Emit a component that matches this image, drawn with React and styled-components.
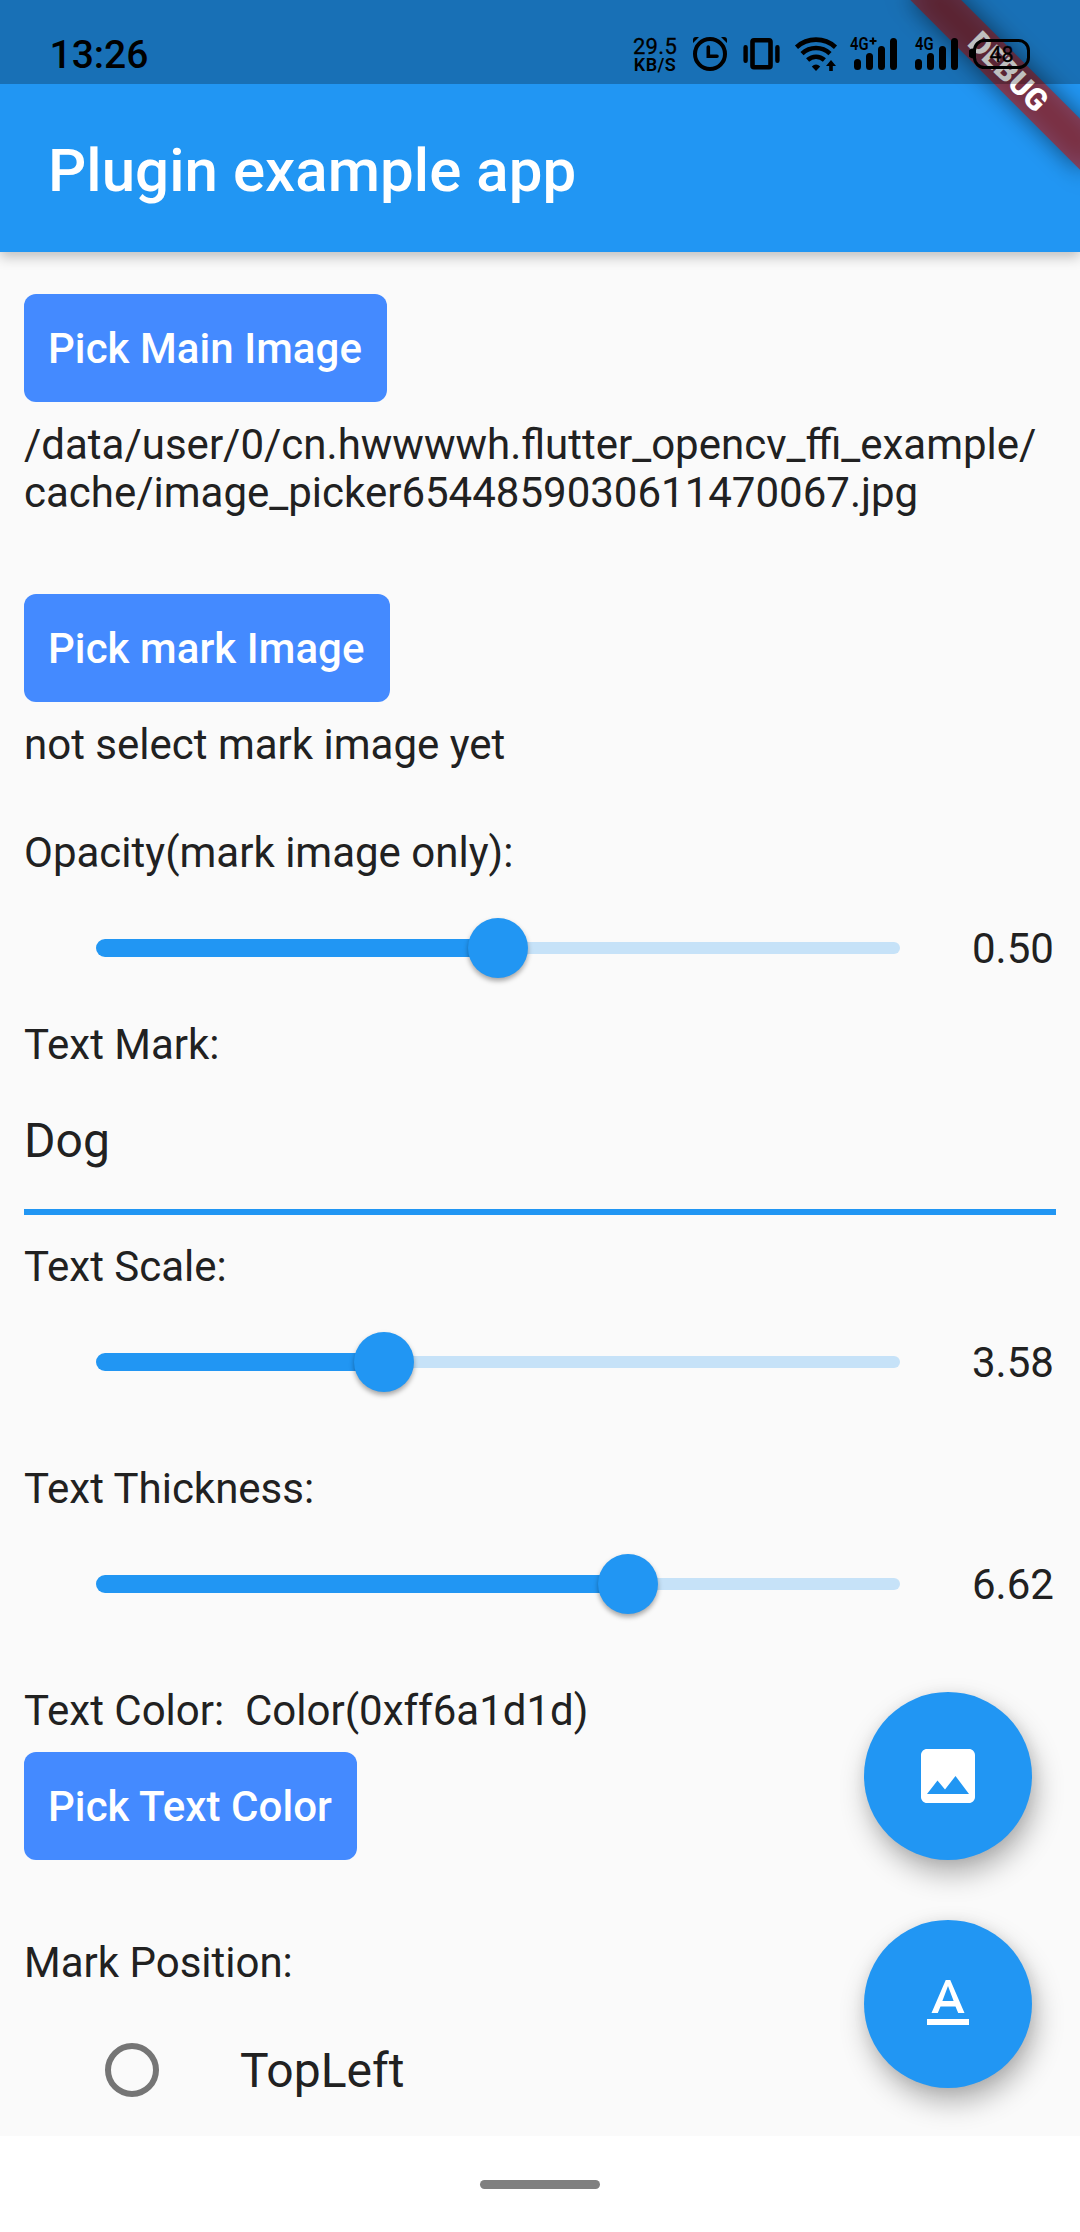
import React from "react";
import styled, { createGlobalStyle } from "styled-components";

const GlobalStyle = createGlobalStyle`
  * { box-sizing: border-box; }
  html, body { margin: 0; padding: 0; background: #fff; }
  body { font-family: Roboto, "Liberation Sans", sans-serif; color: #212121; }
`;

const Screen = styled.div`
  position: relative;
  display: flex;
  flex-direction: column;
  width: 1080px;
  height: 2232px;
  overflow: hidden;
  background: #fafafa;
`;

const AppBar = styled.header`
  flex: none;
  display: flex;
  align-items: center;
  height: 252px;
  padding: 89px 48px 0;
  background: #2196f3;
  box-shadow: 0 5px 12px rgba(0, 0, 0, 0.24);
  z-index: 1;
`;

const Title = styled.h1`
  margin: 0;
  font-size: 60px;
  line-height: 70px;
  font-weight: 500;
  letter-spacing: 0.05px;
  color: #fff;
  white-space: nowrap;
`;

const StatusBar = styled.div`
  position: absolute;
  top: 0;
  left: 0;
  right: 0;
  height: 84px;
  z-index: 4;
  display: flex;
  align-items: flex-start;
  justify-content: space-between;
  padding: 31px 49px 0 49.5px;
  background: rgba(0, 0, 0, 0.25);
  color: #000;
`;

const Clock = styled.span`
  padding-top: 1px;
  font-size: 39px;
  line-height: 46px;
  font-weight: 500;
`;

const StatusIcons = styled.div`
  display: flex;
  align-items: flex-start;
`;

const Speed = styled.div`
  display: flex;
  flex-direction: column;
  align-items: center;
  width: 44px;
  padding-top: 6px;
  white-space: nowrap;
`;

const SpeedValue = styled.span`
  font-size: 22px;
  line-height: 20px;
  font-weight: 400;
  letter-spacing: 0.3px;
  -webkit-text-stroke: 0.3px #000;
`;

const SpeedUnit = styled.span`
  font-size: 18px;
  line-height: 15px;
  font-weight: 600;
  letter-spacing: 0.4px;
`;

const StatusGlyph = styled.svg`
  display: block;
  height: 44px;
  width: ${(p) => p.$w}px;
  margin-left: ${(p) => p.$gap}px;
  font-family: Roboto, sans-serif;
`;

const BannerClip = styled.div`
  position: absolute;
  top: 0;
  right: 0;
  width: 240px;
  height: 240px;
  overflow: hidden;
  z-index: 3;
`;

const BannerRibbon = styled.div`
  position: absolute;
  top: 84px;
  left: 120px;
  width: 240px;
  height: 36px;
  transform-origin: 120px -84px;
  transform: rotate(45deg);
  display: flex;
  align-items: center;
  justify-content: center;
  font-size: 30.6px;
  line-height: 36px;
  font-weight: 900;
  color: #fff;

  &::before {
    content: "";
    position: absolute;
    inset: 0;
    background: rgba(0, 0, 0, 0.5);
    filter: blur(12px);
  }
`;

const BannerText = styled.span`
  position: relative;
  width: 240px;
  text-align: center;
  background: rgba(183, 28, 28, 0.627);
`;

const Body = styled.main`
  flex: 1;
  min-height: 0;
  overflow: hidden;
  display: flex;
  flex-direction: column;
  padding: 24px 24px 0;
`;

const Section = styled.section`
  flex: none;
  display: flex;
  flex-direction: column;
  align-items: stretch;
  margin-bottom: ${(p) => p.$after || 0}px;
`;

const Label = styled.p`
  margin: 0 0 -1px;
  padding-top: 1px;
  font-size: 42px;
  line-height: 48px;
  white-space: pre-wrap;
`;

const Button = styled.button`
  align-self: flex-start;
  height: 108px;
  margin: 18px 0;
  padding: 2px 25px 0 24px;
  border: 0;
  border-radius: 12px;
  background: #448aff;
  color: #fff;
  font: 500 42px/48px Roboto, sans-serif;
  letter-spacing: 0.06px;
  white-space: nowrap;
`;

const SliderRow = styled.div`
  display: flex;
  align-items: center;
  height: 144px;
`;

const SliderArea = styled.div`
  flex: none;
  display: flex;
  align-items: center;
  width: 948px;
  padding: 0 72px;
`;

const ActiveTrack = styled.div`
  flex: none;
  height: 18px;
  border-radius: 9px 0 0 9px;
  background: #2196f3;
`;

const Thumb = styled.div`
  flex: none;
  width: 60px;
  height: 60px;
  margin: 0 -30px;
  border-radius: 50%;
  background: #2196f3;
  box-shadow: 0 3px 5px rgba(0, 0, 0, 0.34);
  z-index: 1;
`;

const InactiveTrack = styled.div`
  flex: 1;
  height: 12px;
  border-radius: 0 6px 6px 0;
  background: #c6e2f8;
`;

const Value = styled.span`
  padding-top: 2px;
  font-size: 42px;
  line-height: 48px;
  white-space: nowrap;
`;

const TextField = styled.input`
  display: block;
  width: 100%;
  height: 147px;
  padding: 3px 0 0;
  border: 0;
  border-bottom: 6px solid #2196f3;
  outline: 0;
  background: transparent;
  color: #212121;
  font: 400 48px/56px Roboto, sans-serif;
`;

const RadioTile = styled.label`
  display: flex;
  align-items: center;
  height: 168px;
  padding: 0 48px;
`;

const RadioRing = styled.span`
  width: 54px;
  height: 54px;
  margin: 0 81px 0 33px;
  border: 6px solid #757575;
  border-radius: 50%;
`;

const RadioText = styled.span`
  padding-top: 2px;
  font-size: 48px;
  line-height: 56px;
`;

const FabColumn = styled.div`
  position: absolute;
  right: 48px;
  bottom: 144px;
  display: flex;
  flex-direction: column;
  gap: 60px;
`;

const Fab = styled.button`
  display: flex;
  align-items: center;
  justify-content: center;
  width: 168px;
  height: 168px;
  padding: 0;
  border: 0;
  border-radius: 50%;
  background: #2196f3;
  box-shadow: 4px 14px 28px rgba(0, 0, 0, 0.29), 1px 2px 14px rgba(0, 0, 0, 0.08);

  svg { width: 72px; height: 72px; fill: #fff; }
`;

const NavBar = styled.nav`
  flex: none;
  display: flex;
  justify-content: center;
  height: 96px;
  padding-top: 44px;
  background: #fff;
  z-index: 2;
`;

const NavHandle = styled.div`
  width: 120px;
  height: 9px;
  border-radius: 5px;
  background: #808080;
`;

function Slider({ fraction, value }) {
  return (
    <SliderRow>
      <SliderArea>
        <ActiveTrack style={{ width: `${fraction * 100}%` }} />
        <Thumb />
        <InactiveTrack />
      </SliderArea>
      <Value>{value}</Value>
    </SliderRow>
  );
}

function Signal({ gap, plus, labelX }) {
  return (
    <StatusGlyph $w={50} $gap={gap} viewBox="0 0 50 44">
      <text x={labelX} y="19" fontSize="17.5" fontWeight="600" textLength="18.5" lengthAdjust="spacingAndGlyphs">4G</text>
      {plus && <path d="M20.5 10h7M24 6.5v7" stroke="#000" strokeWidth="2.2" />}
      <path d="M8.5 31.5v4M20.5 25.5v10M32.5 18.5v17M44.5 10.5v25" stroke="#000" strokeWidth="7" strokeLinecap="round" />
    </StatusGlyph>
  );
}

function StatusIconRow() {
  return (
    <StatusIcons>
      <Speed>
        <SpeedValue>29.5</SpeedValue>
        <SpeedUnit>KB/S</SpeedUnit>
      </Speed>
      <StatusGlyph $w={36} $gap={15} viewBox="0 0 36 44">
        <circle cx="18" cy="23" r="15" fill="none" stroke="#000" strokeWidth="4" />
        <path d="M16.3 16v9.3H25" fill="none" stroke="#000" strokeWidth="3.6" strokeLinecap="round" />
        <path d="M1 12V9a3 3 0 0 1 3-3h3zM35 12V9a3 3 0 0 0-3-3h-3z" />
      </StatusGlyph>
      <StatusGlyph $w={38} $gap={15} viewBox="0 0 38 44">
        <rect x="9.5" y="9.3" width="18" height="27" rx="1.5" fill="none" stroke="#000" strokeWidth="4.6" />
        <path d="M2.6 16.2v13.6M34.4 16.2v13.6" stroke="#000" strokeWidth="4.4" strokeLinecap="round" />
      </StatusGlyph>
      <StatusGlyph $w={44} $gap={13} viewBox="0 0 44 44">
        <g fill="none" stroke="#000" strokeWidth="4.6">
          <path d="M2.5 16.2a29 29 0 0 1 39 0" />
          <path d="M8 22.6a20.5 20.5 0 0 1 28 0" />
          <path d="M13.6 29a12.6 12.6 0 0 1 16.8 0" />
        </g>
        <path d="M22 40l-4.2-4.6a6.5 6.5 0 0 1 8.4 0z" />
        <path d="M37 29l5 6h-3.2v5h-3.6v-5H32z" />
      </StatusGlyph>
      <Signal gap={11} labelX={1} plus />
      <Signal gap={11} labelX={5} />
      <StatusGlyph $w={62} $gap={9} viewBox="0 0 62 44">
        <path d="M4 18.5v8a4 4 0 0 1 0-8z" stroke="#000" strokeWidth="2" />
        <rect x="5.5" y="9.5" width="54" height="27" rx="10" fill="none" stroke="#000" strokeWidth="3" />
        <text x="20.5" y="30.7" fontSize="21.5" stroke="#000" strokeWidth="0.3">48</text>
      </StatusGlyph>
    </StatusIcons>
  );
}

export default function App() {
  return (
    <>
      <GlobalStyle />
      <Screen>
        <StatusBar>
          <Clock>13:26</Clock>
          <StatusIconRow />
        </StatusBar>
        <BannerClip>
          <BannerRibbon>
            <BannerText>DEBUG</BannerText>
          </BannerRibbon>
        </BannerClip>
        <AppBar>
          <Title>Plugin example app</Title>
        </AppBar>
        <Body>
          <Section $after={60}>
            <Button>Pick Main Image</Button>
            <Label>
              /data/user/0/cn.hwwwwh.flutter_opencv_ffi_example/
              <br />
              cache/image_picker6544859030611470067.jpg
            </Label>
          </Section>
          <Section $after={60}>
            <Button>Pick mark Image</Button>
            <Label>not select mark image yet</Label>
          </Section>
          <Section>
            <Label>Opacity(mark image only):</Label>
            <Slider fraction={0.5} value="0.50" />
          </Section>
          <Section $after={27}>
            <Label>Text Mark:</Label>
            <TextField type="text" defaultValue="Dog" />
          </Section>
          <Section $after={30}>
            <Label>Text Scale:</Label>
            <Slider fraction={0.358} value="3.58" />
          </Section>
          <Section $after={30}>
            <Label>Text Thickness:</Label>
            <Slider fraction={0.662} value="6.62" />
          </Section>
          <Section $after={60}>
            <Label>{"Text Color:  Color(0xff6a1d1d)"}</Label>
            <Button>Pick Text Color</Button>
          </Section>
          <Section>
            <Label>Mark Position:</Label>
            <RadioTile>
              <RadioRing />
              <RadioText>TopLeft</RadioText>
            </RadioTile>
          </Section>
        </Body>
        <FabColumn>
          <Fab aria-label="Image mark">
            <svg viewBox="0 0 24 24">
              <path d="M21 19V5c0-1.1-.9-2-2-2H5c-1.1 0-2 .9-2 2v14c0 1.1.9 2 2 2h14c1.1 0 2-.9 2-2zM8.5 13.5l2.5 3.01L14.5 12l4.5 6H5l3.5-4.5z" />
            </svg>
          </Fab>
          <Fab aria-label="Text mark">
            <svg viewBox="0 0 24 24">
              <path d="M5 17v2h14v-2H5zm4.5-4.2h5l.9 2.2h2.1L12.75 4h-1.5L6.5 15h2.1l.9-2.2zM12 5.98L13.87 11h-3.74L12 5.98z" />
            </svg>
          </Fab>
        </FabColumn>
        <NavBar>
          <NavHandle />
        </NavBar>
      </Screen>
    </>
  );
}
